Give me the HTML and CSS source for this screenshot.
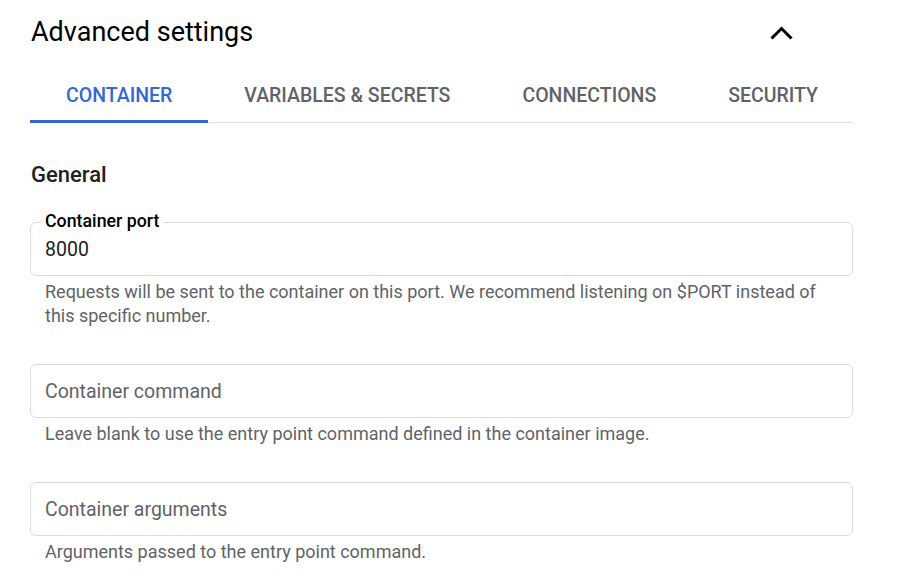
FILE: index.html
```html
<!DOCTYPE html>
<html>
<head>
<meta charset="utf-8">
<link rel="stylesheet" href="styles.css">
</head>
<body>
<div class="panel">
  <div class="header">
    <h1 class="title">Advanced settings</h1>
    <button class="collapse" aria-label="Collapse">
      <svg width="24" height="14" viewBox="0 0 24 14"><polyline points="1.5,12.5 11.5,2.5 21.5,12.5" fill="none" stroke="#000" stroke-width="3"/></svg>
    </button>
  </div>
  <div class="tabs">
    <div class="tab active">CONTAINER</div>
    <div class="tab">VARIABLES &amp; SECRETS</div>
    <div class="tab">CONNECTIONS</div>
    <div class="tab">SECURITY</div>
  </div>
  <h2 class="section">General</h2>
  <div class="field">
    <div class="box filled">
      <span class="float-label">Container port</span>
      <span class="value">8000</span>
    </div>
    <p class="hint">Requests will be sent to the container on this port. We recommend listening on $PORT instead of this specific number.</p>
  </div>
  <div class="field">
    <div class="box">
      <span class="placeholder">Container command</span>
    </div>
    <p class="hint">Leave blank to use the entry point command defined in the container image.</p>
  </div>
  <div class="field">
    <div class="box">
      <span class="placeholder">Container arguments</span>
    </div>
    <p class="hint">Arguments passed to the entry point command.</p>
  </div>
</div>
</body>
</html>
```

FILE: styles.css
```css
* { box-sizing: border-box; }
html, body { margin: 0; padding: 0; background: #fff; }
body { font-family: Roboto, "Noto Sans", sans-serif; color: #202124; }
.panel { width: 853px; padding: 14px 0 0 30px; }
.header { display: flex; align-items: center; justify-content: space-between; height: 36px; }
.title { margin: 0 0 0 1px; font-size: 27px; font-weight: 400; line-height: 36px; color: #000; }
.collapse { border: 0; background: none; padding: 0; width: 24px; height: 14px; margin-right: 59px; margin-top: 1px; display: flex; }
.tabs { display: flex; margin-top: 21px; border-bottom: 1px solid #e0e0e0; }
.tab { padding: 0 36px; height: 52px; line-height: 50px; font-size: 19.5px; font-weight: 500; color: #5f6368; border-bottom: 3px solid transparent; margin-bottom: -1px; white-space: nowrap; }
.tab.active { color: #3367d6; border-bottom-color: #3367d6; }
.section { margin: 38px 0 0 1px; font-size: 22px; font-weight: 500; line-height: 28px; color: #202124; }
.field { margin-top: 36px; }
.section + .field { margin-top: 33px; }
.box { position: relative; height: 54px; border: 1px solid #dadce0; border-radius: 6px; display: flex; align-items: center; padding: 0 14px; font-size: 19.5px; }
.float-label { position: absolute; left: 10px; top: -12px; background: #fff; padding: 0 4px; font-size: 17.8px; line-height: 20px; color: #000; font-weight: 500; }
.value { color: #202124; }
.placeholder { color: #5f6368; }
.hint { margin: 4px 30px 0 15px; font-size: 18px; line-height: 24px; color: #5f6368; }
```
